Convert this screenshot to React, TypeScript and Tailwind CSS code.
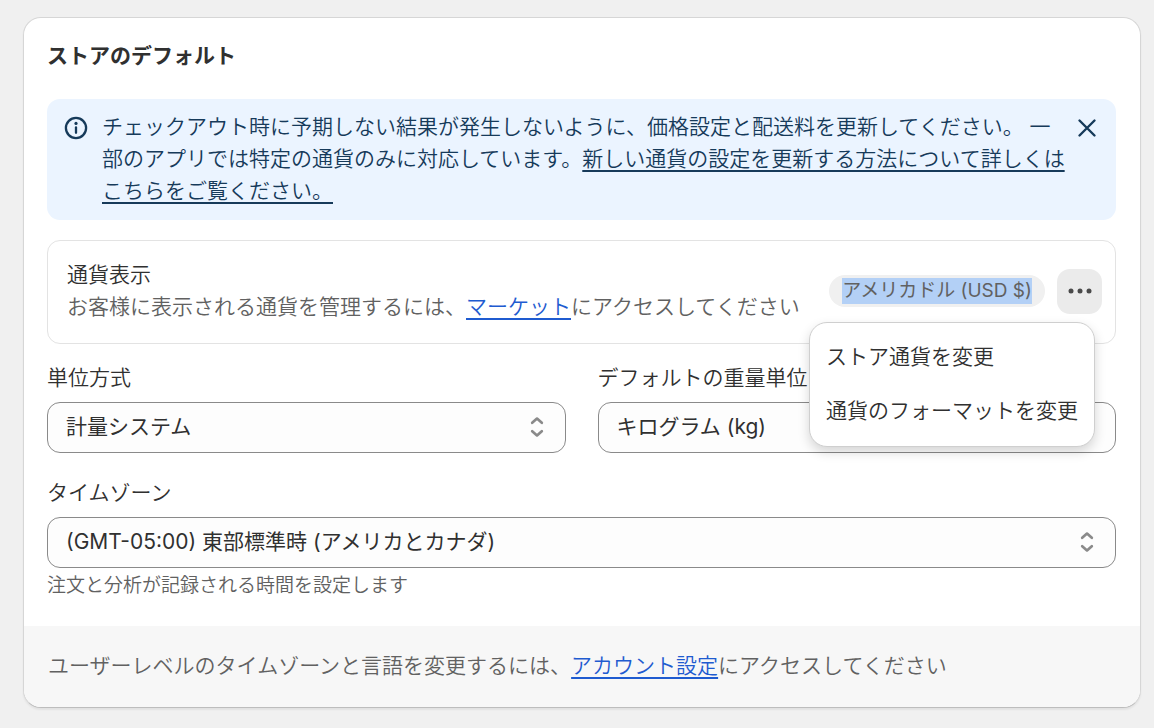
import { useId, useState } from "react";
import type { ReactNode } from "react";

interface SelectFieldProps {
  label: string;
  options: string[];
  hint?: string;
}

function SelectIcon() {
  return (
    <svg
      viewBox="0 0 20 24"
      className="pointer-events-none col-start-1 row-start-1 mr-[19px] mb-px h-6 w-5 self-center justify-self-end"
      fill="none"
      stroke="#8a8a8a"
      strokeWidth="2.7"
      strokeLinecap="round"
      strokeLinejoin="round"
      aria-hidden="true"
    >
      <path d="M5.2 7.8 L10 3.6 L14.8 7.8" />
      <path d="M5.2 16.2 L10 20.4 L14.8 16.2" />
    </svg>
  );
}

function SelectField({ label, options, hint }: SelectFieldProps) {
  const id = useId();

  return (
    <div className="min-w-0">
      <label htmlFor={id} className="block text-[21px] leading-8 whitespace-nowrap">
        {label}
      </label>
      <div className="mt-2 grid">
        <select
          id={id}
          className="col-start-1 row-start-1 h-[51px] w-full appearance-none rounded-[13px] border border-[#8a8a8a] bg-[#fdfdfd] pr-12 pb-0.5 pl-[18px] text-[21px] font-normal text-[#303030]"
        >
          {options.map((option) => (
            <option key={option}>{option}</option>
          ))}
        </select>
        <SelectIcon />
      </div>
      {hint && <p className="mt-1 text-[19px] leading-7 text-[#616161]">{hint}</p>}
    </div>
  );
}

function TextLink({ children }: { children: ReactNode }) {
  return (
    <a href="#" className="text-[#1f5bd0] underline decoration-2 underline-offset-4">
      {children}
    </a>
  );
}

function InfoBanner({ onDismiss }: { onDismiss: () => void }) {
  return (
    <div className="mb-5 flex items-start rounded-[13px] bg-[#ebf4ff] pt-3 pr-3.5 pb-[13px] pl-[17px] text-[#163a5a]">
      <svg
        viewBox="0 0 24 24"
        className="mt-[5px] mr-3.5 size-6 shrink-0"
        fill="none"
        stroke="currentColor"
        strokeWidth="2.3"
        strokeLinecap="round"
        aria-hidden="true"
      >
        <circle cx="12" cy="12" r="10.1" />
        <path d="M12 11.4 V16.8" />
        <circle cx="12" cy="7.4" r="1.6" fill="currentColor" stroke="none" />
      </svg>
      <p className="min-w-0 flex-1 text-[21px] leading-8">
        チェックアウト時に予期しない結果が発生しないように、価格設定と配送料を更新してください。 一部のアプリでは特定の通貨のみに対応しています。
        <a href="#" className="underline decoration-2 underline-offset-4">
          新しい通貨の設定を更新する方法について詳しくはこちらをご覧ください。
        </a>
      </p>
      <button
        type="button"
        aria-label="閉じる"
        onClick={onDismiss}
        className="mt-0.5 ml-0.5 flex size-[30px] shrink-0 items-center justify-center"
      >
        <svg
          viewBox="0 0 20 20"
          className="size-5"
          fill="none"
          stroke="currentColor"
          strokeWidth="2.4"
          strokeLinecap="round"
        >
          <path d="M2.5 2.5 L17.5 17.5 M17.5 2.5 L2.5 17.5" />
        </svg>
      </button>
    </div>
  );
}

function CurrencyMenu() {
  const [open, setOpen] = useState(true);

  return (
    <div className="relative">
      <button
        type="button"
        aria-label="その他の操作"
        aria-expanded={open}
        onClick={() => setOpen(!open)}
        className="flex size-[45px] items-center justify-center rounded-[13px] bg-[#ebebeb]"
      >
        <svg viewBox="0 0 24 6" className="h-1.5 w-6" fill="#4a4a4a" aria-hidden="true">
          <circle cx="3" cy="3" r="2.5" />
          <circle cx="12" cy="3" r="2.5" />
          <circle cx="21" cy="3" r="2.5" />
        </svg>
      </button>
      {open && (
        <div className="absolute top-[53px] right-[7px] z-10 flex flex-col rounded-[18px] border border-[#cfcfcf] bg-white py-[7px] pb-2 text-[21px] text-[#303030] shadow-[0_5px_12px_rgba(0,0,0,0.16)]">
          <button type="button" className="h-[54px] px-4 text-left whitespace-nowrap">
            ストア通貨を変更
          </button>
          <button type="button" className="h-[54px] px-4 text-left whitespace-nowrap">
            通貨のフォーマットを変更
          </button>
        </div>
      )}
    </div>
  );
}

export default function App() {
  const [bannerVisible, setBannerVisible] = useState(true);

  return (
    <main
      lang="ja"
      className="min-h-screen bg-[#f0f0f0] pt-[17px] pr-[13px] pb-5 pl-[23px] font-['Inter','Noto_Sans_CJK_JP',sans-serif] font-[350] text-[#303030]"
    >
      <section className="rounded-[18px] border border-[#d6d6d6] border-b-[#bdbdbd] bg-white shadow-[0_2px_2px_rgba(0,0,0,0.06)]">
        <div className="pt-[22px] pr-6 pb-[26px] pl-[23px]">
          <h2 className="mb-[27px] text-[21px] leading-8 font-bold">ストアのデフォルト</h2>

          {bannerVisible && <InfoBanner onDismiss={() => setBannerVisible(false)} />}

          <div className="flex items-center rounded-[13px] border border-[#e3e3e3] pt-[18px] pr-[13px] pb-5 pl-[19px]">
            <div className="min-w-0 flex-1 text-[21px] leading-8">
              <h3>通貨表示</h3>
              <p className="text-[#616161]">
                お客様に表示される通貨を管理するには、<TextLink>マーケット</TextLink>
                にアクセスしてください
              </p>
            </div>
            <span className="mr-3 flex h-8 shrink-0 items-center rounded-2xl bg-[#f0f0f0] px-[13px] text-[19px] font-normal text-[#616161]">
              <span className="bg-[#b3d0f6] leading-[26px]">アメリカドル (USD $)</span>
            </span>
            <CurrencyMenu />
          </div>

          <div className="mt-[18px] grid grid-cols-2 gap-x-8 gap-y-6">
            <SelectField label="単位方式" options={["計量システム", "ヤード・ポンド法"]} />
            <SelectField label="デフォルトの重量単位" options={["キログラム (kg)", "グラム (g)"]} />
            <div className="col-span-2">
              <SelectField
                label="タイムゾーン"
                options={["(GMT-05:00) 東部標準時 (アメリカとカナダ)"]}
                hint="注文と分析が記録される時間を設定します"
              />
            </div>
          </div>
        </div>

        <footer className="rounded-b-[17px] bg-[#f7f7f7] px-6 pt-6 pb-[25px] text-[21px] leading-8 text-[#616161]">
          ユーザーレベルのタイムゾーンと言語を変更するには、<TextLink>アカウント設定</TextLink>
          にアクセスしてください
        </footer>
      </section>
    </main>
  );
}
